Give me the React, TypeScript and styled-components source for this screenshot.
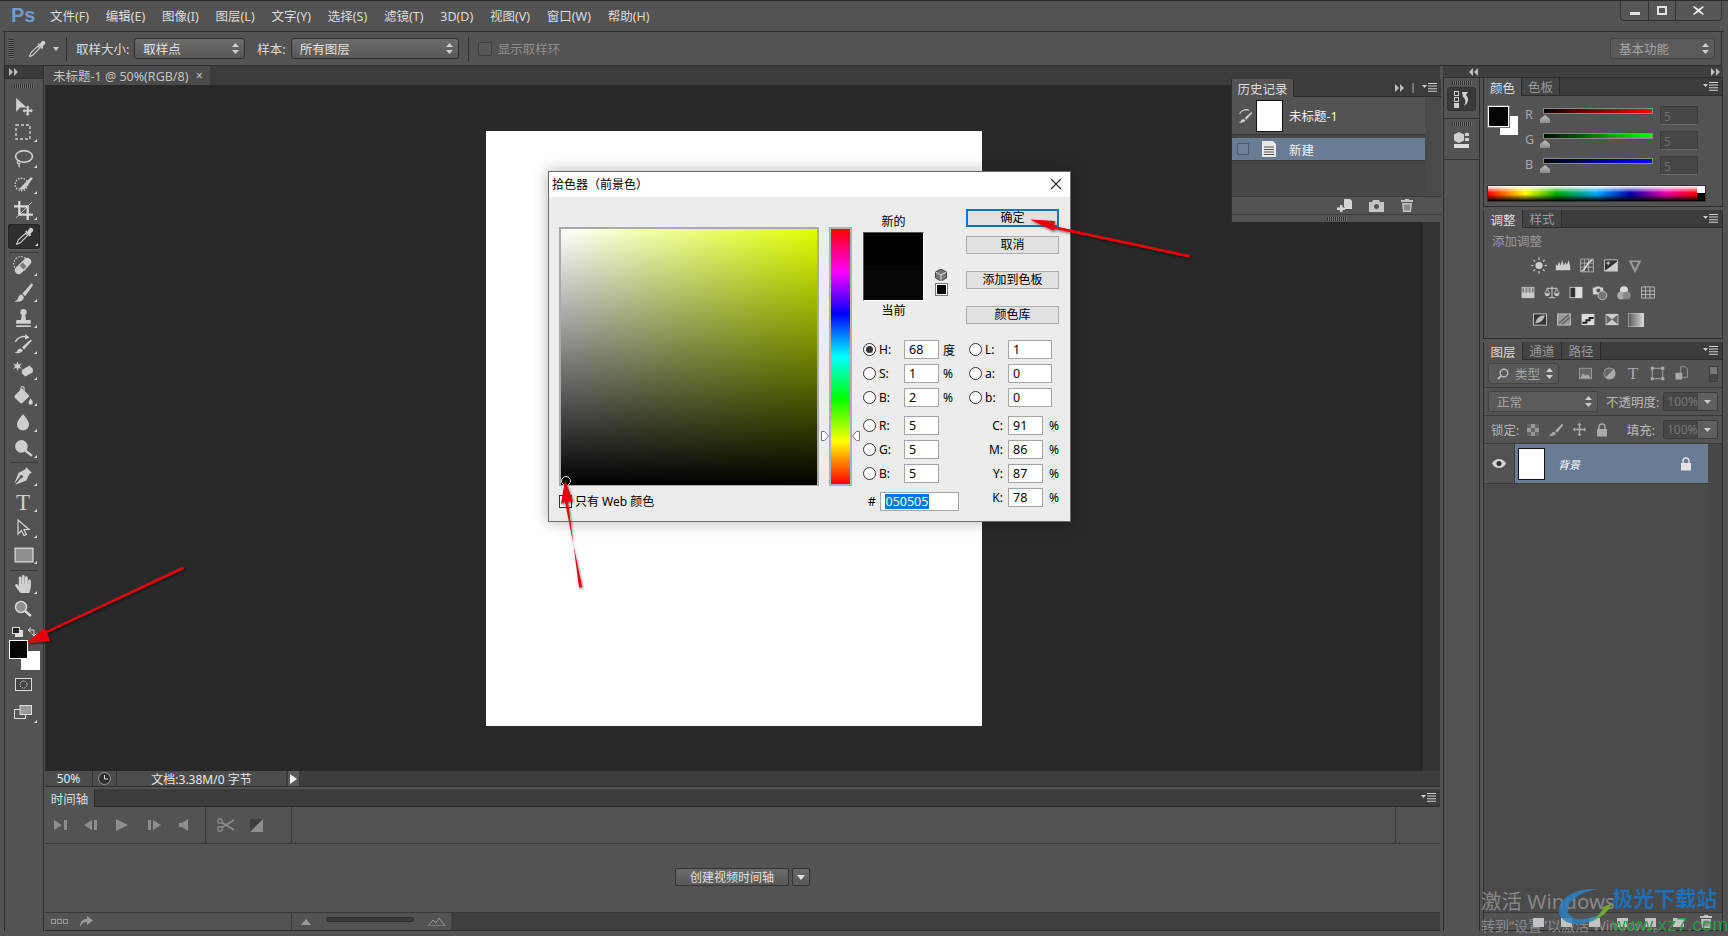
import styled, { createGlobalStyle } from 'styled-components'
import { ReactNode } from 'react'
import { FaHandPaper } from 'react-icons/fa'

const Global = createGlobalStyle`
  html, body { margin: 0; padding: 0; background: #535353; }
  * { box-sizing: border-box; }
`

const sans = `"Noto Sans", "Noto Sans CJK SC", sans-serif`

const Root = styled.div`
  position: relative;
  display: flex;
  flex-direction: column;
  width: 1728px;
  height: 936px;
  overflow: hidden;
  background: #535353;
  font-family: ${sans};
  font-size: 12px;
  color: #d8d8d8;
  border-top: 1px solid #2a2a2a;
`

/* top bars */
const MenuBar = styled.div`
  display: flex;
  align-items: flex-start;
  height: 31px;
  padding-left: 8px;
  background: #535353;
  border-bottom: 1px solid #303030;
  margin: 0 4px 0 3px;
`
const Logo = styled.div`
  width: 39px;
  font-family: "Liberation Sans", sans-serif;
  font-size: 20px;
  line-height: 29px;
  font-weight: 700;
  color: #6d9ccf;
`
const MenuItems = styled.div`
  display: flex;
  gap: 16.8px;
  font-size: 12.5px;
  line-height: 31px;
  color: #dcdcdc;
`
const WinButtons = styled.div`
  display: flex;
  margin-left: auto;
  margin-top: -1px;
  margin-right: 2px;
  height: 21px;
  border: 1px solid #333;
  border-top: none;
  border-radius: 0 0 4px 4px;
  background: #565656;
`
const WinButton = styled.div<{ $w?: number }>`
  display: flex;
  align-items: center;
  justify-content: center;
  width: ${(p) => p.$w ?? 27}px;
  border-left: 1px solid #333;
  &:first-child { border-left: none; }
`
const OptionsBar = styled.div`
  display: flex;
  align-items: center;
  height: 34px;
  margin: 0 6px 0 4px;
  background: #535353;
  border-left: 1px solid #2f2f2f;
  border-right: 1px solid #2f2f2f;
  border-bottom: 1px solid #2f2f2f;
  font-size: 12.5px;
  color: #dcdcdc;
`
const Grip = styled.div`
  width: 5px;
  height: 20px;
  margin: 0 13px 0 4px;
  background: repeating-linear-gradient(to bottom, #2e2e2e 0 1px, #6a6a6a 1px 2px);
`
const OptSep = styled.div<{ $left: number }>`
  width: 1px;
  height: 24px;
  margin: 0 9px 0 ${(p) => p.$left}px;
  background: #2f2f2f;
`
const Select = styled.div<{ $w: number; $dim?: boolean }>`
  display: flex;
  align-items: center;
  justify-content: space-between;
  width: ${(p) => p.$w}px;
  height: 21px;
  padding: 0 5px 0 8px;
  flex: none;
  border: 1px solid ${(p) => (p.$dim ? '#444' : '#2d2d2d')};
  border-radius: 3px;
  background: ${(p) => (p.$dim ? '#5a5a5a' : 'linear-gradient(#6c6c6c, #585858)')};
  color: ${(p) => (p.$dim ? '#a4a4a4' : '#e2e2e2')};
  font-size: 12.5px;
`
const OptLabel = styled.span<{ $left: number }>`
  margin-left: ${(p) => p.$left}px;
  margin-right: 5px;
  white-space: nowrap;
`
const DimCheck = styled.span`
  width: 14px;
  height: 14px;
  margin-right: 6px;
  border: 1px solid #3f3f3f;
  border-radius: 2px;
  background: #585858;
`
const DimText = styled.span`
  color: #8f8f8f;
`
const Right = styled.div`
  margin-left: auto;
  margin-right: 6px;
`
const ArrowSmall = styled.svg`
  margin-left: 6px;
`

const Updown = () => (
  <svg width="7" height="11" viewBox="0 0 7 11">
    <path d="M3.5 0L7 4H0zM3.5 11L0 7h7z" fill="#d0d0d0" />
  </svg>
)

/* workspace */
const Workspace = styled.div`
  display: flex;
  flex: 1;
  min-height: 0;
  padding: 0 5px 5px 4px;
`
const ToolColumn = styled.div`
  display: flex;
  flex-direction: column;
  width: 40px;
  flex: none;
  margin-right: 1px;
  background: #535353;
  border-right: 1px solid #2e2e2e;
  border-left: 1px solid #2e2e2e;
`
const ColHeader = styled.div`
  display: flex;
  align-items: center;
  height: 13px;
  padding: 0 4px;
  background: #3a3a3a;
  border-bottom: 1px solid #2e2e2e;
`
const GripRow = styled.div`
  height: 14px;
  display: flex;
  justify-content: center;
  align-items: center;
  &::before {
    content: '';
    width: 20px;
    height: 4px;
    background: repeating-linear-gradient(to right, #2e2e2e 0 1px, #707070 1px 2px);
  }
`
const Tool = styled.div<{ $on?: boolean; $more?: boolean; $h?: number; $top?: number }>`
  position: relative;
  display: flex;
  align-items: center;
  justify-content: center;
  height: ${(p) => p.$h ?? 26}px;
  margin: ${(p) => p.$top ?? 0}px 4px 0 2px;
  color: #cfcfcf;
  border-radius: 3px;
  ${(p) => p.$on && 'background: #2f2f2f; box-shadow: inset 0 0 0 1px #262626, 0 1px 0 #666; height: 25px; margin: 1px 3px 0 3px;'}
  ${(p) => p.$more && `
    &::after {
      content: '';
      position: absolute;
      right: 2px;
      bottom: 3px;
      border-left: 3px solid transparent;
      border-bottom: 3px solid #e0e0e0;
    }
  `}
`
const ToolSep = styled.div<{ $before: number }>`
  height: 1px;
  margin: ${(p) => p.$before}px 5px 0.5px;
  background: #3a3a3a;
`
const SerifT = styled.span<{ $size?: number; $c?: string }>`
  font-family: "Liberation Serif", serif;
  font-size: ${(p) => p.$size ?? 23}px;
  line-height: 1;
  color: ${(p) => p.$c ?? '#cfcfcf'};
`
const SwapRow = styled.div`
  display: flex;
  justify-content: space-between;
  align-items: center;
  height: 16px;
  padding: 0 5px 0 7px;
  margin-top: 3px;
`
const ColorStack = styled.div`
  position: relative;
  height: 33px;
  margin: 0 0 0 3px;
  width: 30px;
`
const FgChip = styled.div`
  position: absolute;
  left: 1px;
  top: 0;
  width: 19px;
  height: 19px;
  background: #050505;
  border: 1px solid #fff;
  z-index: 1;
`
const BgChip = styled.div`
  position: absolute;
  left: 13px;
  top: 11px;
  width: 19px;
  height: 19px;
  background: #fff;
`

const Center = styled.div`
  display: flex;
  flex-direction: column;
  width: 1395px;
  flex: none;
`
const TabBar = styled.div`
  display: flex;
  height: 20px;
  flex: none;
  background: #3c3c3c;
  border-bottom: 1px solid #2a2a2a;
`
const DocTab = styled.div`
  display: flex;
  align-items: center;
  justify-content: space-between;
  width: 165px;
  padding: 0 7px 0 8px;
  background: #4a4a4a;
  color: #c4c4c4;
  font-size: 12.5px;
  white-space: nowrap;
`
const CanvasRow = styled.div`
  display: flex;
  flex: 1;
  min-height: 0;
`
const Stage = styled.div`
  flex: 1;
  background: #282828;
  padding: 45px 0 0 441px;
`
const Sheet = styled.div`
  width: 496px;
  height: 595px;
  background: #fff;
`
const ScrollTrack = styled.div`
  width: 17px;
  background: #343434;
`
const StatusBar = styled.div`
  display: flex;
  align-items: stretch;
  height: 16px;
  flex: none;
  background: #3d3d3d;
  border-bottom: 1px solid #2c2c2c;
  font-size: 12px;
  color: #e8e8e8;
`
const StatusCell = styled.div<{ $w: number }>`
  display: flex;
  align-items: center;
  justify-content: center;
  width: ${(p) => p.$w}px;
  background: #4c4c4c;
  border-right: 1px solid #363636;
`
const StatusArrow = styled(StatusCell)`
  background: #5a5a5a;
  margin-left: 1px;
`
const Timeline = styled.div`
  display: flex;
  flex-direction: column;
  height: 142px;
  flex: none;
  margin-top: 2px;
  background: #535353;
  border-bottom: 1px solid #2c2c2c;
`
const PanelTabs = styled.div`
  display: flex;
  align-items: stretch;
  height: 18px;
  flex: none;
  background: #3c3c3c;
  border-bottom: 1px solid #2c2c2c;
`
const PanelTab = styled.div<{ $on?: boolean; $w: number }>`
  display: flex;
  align-items: center;
  justify-content: center;
  width: ${(p) => p.$w}px;
  margin-bottom: ${(p) => (p.$on ? '-1px' : '0')};
  background: ${(p) => (p.$on ? '#535353' : '#434343')};
  border-right: 1px solid #2c2c2c;
  color: ${(p) => (p.$on ? '#dedede' : '#999')};
  font-size: 12.5px;
`
const PanelTools = styled.div`
  display: flex;
  align-items: center;
  gap: 8px;
  margin-left: auto;
  padding-right: 4px;
`
const PanelBars = styled.span`
  width: 2px;
  height: 10px;
  border-left: 1px solid #777;
  border-right: 1px solid #777;
`
const TimeControls = styled.div`
  display: flex;
  height: 37px;
  flex: none;
  border-bottom: 1px solid #383838;
`
const TransportGroup = styled.div<{ $w: number; $pad?: number }>`
  display: flex;
  align-items: center;
  width: ${(p) => p.$w}px;
  border-right: 1px solid #383838;
  padding-left: ${(p) => p.$pad ?? 0}px;
  color: #8e8e8e;
`
const TimeSpacer = styled.div`
  width: 1104px;
  border-right: 1px solid #383838;
`
const Transport = styled.span<{ $w: number }>`
  display: flex;
  justify-content: center;
  width: ${(p) => p.$w}px;
`
const TimeBody = styled.div`
  display: flex;
  flex: 1;
  align-items: center;
  justify-content: center;
  gap: 3px;
  padding-bottom: 2px;
`
const CreateButton = styled.div`
  width: 114px;
  height: 18px;
  line-height: 17px;
  text-align: center;
  border: 1px solid #333;
  border-radius: 2px;
  background: linear-gradient(#6a6a6a, #595959);
  color: #e0e0e0;
  font-size: 12px;
`
const CreateDrop = styled(CreateButton)`
  width: 18px;
  display: flex;
  align-items: center;
  justify-content: center;
`
const TimeFoot = styled.div`
  display: flex;
  height: 18px;
  flex: none;
  background: #404040;
  border-top: 1px solid #383838;
`
const FootLeft = styled.div`
  display: flex;
  align-items: center;
  gap: 11px;
  width: 247px;
  padding-left: 6px;
  background: #535353;
  border-right: 1px solid #383838;
`
const FootRight = styled.div`
  display: flex;
  align-items: center;
  justify-content: space-between;
  width: 159px;
  padding: 0 6px 0 9px;
  background: #535353;
`
const TinyRow = styled.span`
  display: flex;
  gap: 1px;
`
const Tiny = styled.span`
  width: 5px;
  height: 5px;
  border: 1px solid #9a9a9a;
`
const ZoomSlider = styled.div`
  width: 88px;
  height: 5px;
  border-radius: 3px;
  background: #3b3b3b;
  border: 1px solid #2b2b2b;
  margin-top: -4px;
`

/* right dock */
const Side = styled.div`
  display: flex;
  flex-direction: column;
  width: 280px;
  flex: none;
  margin-left: 3px;
`
const SideHeader = styled.div`
  display: flex;
  align-items: center;
  justify-content: space-between;
  height: 12px;
  flex: none;
  padding: 0 3px 0 26px;
  background: #3f3f3f;
  border-bottom: 1px solid #2d2d2d;
`
const SideBody = styled.div`
  display: flex;
  flex: 1;
  min-height: 0;
  gap: 3px;
`
const Dock = styled.div`
  width: 37px;
  flex: none;
  border-left: 1px solid #2d2d2d;
  border-right: 1px solid #2d2d2d;
`
const DockGroup = styled.div`
  height: 41px;
  border-bottom: 1px solid #333;
  display: flex;
  flex-direction: column;
  align-items: center;
`
const DockGrip = styled(GripRow)`
  height: 9px;
  flex: none;
`
const DockButton = styled.div<{ $on?: boolean }>`
  display: flex;
  align-items: center;
  justify-content: center;
  width: 29px;
  height: 24px;
  border-radius: 4px;
  ${(p) => p.$on && 'background: #3a3a3a; box-shadow: inset 0 0 0 1px #333;'}
`
const Panels = styled.div`
  display: flex;
  flex-direction: column;
  gap: 3px;
  width: 240px;
  flex: none;
`
const Panel = styled.div<{ $h?: number }>`
  display: flex;
  flex-direction: column;
  ${(p) => (p.$h ? `height: ${p.$h}px; flex: none;` : 'flex: 1; min-height: 0;')}
  background: #535353;
  border: 1px solid #2d2d2d;
  border-top: none;
`
const ColorBody = styled.div`
  display: flex;
  padding: 10px 0 0 4px;
  height: 90px;
`
const ChipStack = styled.div`
  position: relative;
  width: 30px;
  height: 30px;
  margin-right: 7px;
  flex: none;
`
const ChipFg = styled.div`
  position: absolute;
  left: 0;
  top: 0;
  width: 21px;
  height: 21px;
  background: #050505;
  border: 1px solid #fff;
  outline: 1px solid #777;
  z-index: 1;
`
const ChipBg = styled.div`
  position: absolute;
  left: 12px;
  top: 10px;
  width: 18px;
  height: 19px;
  background: #fff;
`
const Sliders = styled.div`
  display: flex;
  flex-direction: column;
  gap: 6px;
`
const SliderRow = styled.div`
  display: grid;
  grid-template-columns: 18px 110px 38px;
  height: 19px;
  align-items: start;
  color: #a9a9a9;
  font-size: 12.5px;
`
const SliderLabel = styled.span`
  line-height: 17px;
`
const SliderTrack = styled.div<{ $end: string }>`
  position: relative;
  height: 6px;
  margin-top: 2px;
  background: linear-gradient(to right, #050505, ${(p) => p.$end});
  outline: 1px solid #888;
  outline-offset: -1px;
  &::after {
    content: '';
    position: absolute;
    left: -3px;
    top: 7px;
    width: 10px;
    height: 8px;
    background: linear-gradient(#c0c0c0, #8a8a8a);
    clip-path: polygon(50% 0, 100% 50%, 100% 100%, 0 100%, 0 50%);
  }
`
const SliderValue = styled.div`
  margin-left: 7px;
  height: 19px;
  width: 38px;
  line-height: 19px;
  padding-left: 3px;
  background: #464646;
  border: 1px solid #3d3d3d;
  border-bottom-color: #6a6a6a;
  color: #6f6f6f;
  font-size: 12px;
`
const Spectrum = styled.div`
  display: flex;
  width: 217px;
  height: 15px;
  margin-left: 4px;
  outline: 1px solid #333;
`
const SpectrumRamp = styled.div`
  flex: 1;
  background:
    linear-gradient(to bottom, #fff, rgba(255,255,255,0) 45%, rgba(0,0,0,0) 55%, #000),
    linear-gradient(to right, #f00, #ff0 18%, #0a0 33%, #0af 52%, #00a 68%, #e0a 85%, #f00);
`
const SpectrumEnd = styled.div`
  width: 8px;
  background: linear-gradient(#fff 50%, #000 50%);
`
const AdjustTitle = styled.div`
  padding: 3px 0 0 8px;
  height: 24px;
  color: #999;
  font-size: 12.5px;
`
const IconRow = styled.div<{ $pad: number }>`
  display: flex;
  gap: 8px;
  height: 27px;
  align-items: center;
  padding-left: ${(p) => p.$pad}px;
`
const IconCell = styled.div`
  display: flex;
  width: 16px;
  height: 16px;
  align-items: center;
  justify-content: center;
`
const FilterRow = styled.div`
  display: flex;
  align-items: center;
  height: 28px;
  padding-left: 4px;
  border-bottom: 1px solid #3a3a3a;
  flex: none;
`
const LayerIcons = styled.div<{ $left?: number; $gap?: number }>`
  display: flex;
  gap: ${(p) => p.$gap ?? 8}px;
  margin-left: ${(p) => p.$left ?? 18}px;
`
const Toggle = styled.div`
  width: 9px;
  height: 16px;
  margin-left: 20px;
  background: linear-gradient(#777 50%, #474747 50%);
  border: 1px solid #3d3d3d;
`
const SmallLabel = styled.span<{ $left: number; $auto?: boolean }>`
  margin-left: ${(p) => (p.$auto ? 'auto' : `${p.$left}px`)};
  margin-right: 4px;
  color: #b9b9b9;
  font-size: 12.5px;
  white-space: nowrap;
`
const DimBox = styled.div<{ $auto?: boolean }>`
  display: flex;
  height: 19px;
  width: 55px;
  border: 1px solid #3b3b3b;
  border-radius: 2px;
  margin-left: ${(p) => (p.$auto ? 'auto' : '4px')};
  margin-right: 4px;
  flex: none;
`
const DimValue = styled.span`
  flex: 1;
  line-height: 17px;
  padding-left: 3px;
  background: #474747;
  color: #777;
  font-size: 12px;
`
const DimArrow = styled.span`
  display: flex;
  width: 19px;
  align-items: center;
  justify-content: center;
  background: #5f5f5f;
`
const LayerList = styled.div`
  flex: 1;
  display: flex;
  min-height: 0;
  background: #4a4a4a;
`
const LayerMain = styled.div`
  width: 224px;
  flex: none;
`
const LayerTrack = styled.div`
  flex: 1;
  background: #474747;
`
const LayerRow = styled.div`
  display: flex;
  height: 40px;
  border-bottom: 1px solid #3a3a3a;
  background: #535353;
`
const EyeCell = styled.div`
  display: flex;
  align-items: center;
  justify-content: center;
  width: 31px;
  border-right: 1px solid #3a3a3a;
`
const LayerBody = styled.div`
  display: flex;
  align-items: center;
  flex: 1;
  padding: 0 16px 0 3px;
  background: #6a7b94;
`
const LayerThumb = styled.div`
  width: 27px;
  height: 32px;
  border: 1px solid #111;
  background: #fff;
  margin-right: 13px;
`
const LayerName = styled.span`
  flex: 1;
  font-style: italic;
  font-size: 11px;
  color: #fff;
`
const PanelFoot = styled.div`
  display: flex;
  height: 18px;
  flex: none;
  align-items: center;
  justify-content: flex-end;
  gap: 15px;
  padding-right: 10px;
  border-top: 1px solid #3a3a3a;
`

/* floating history panel */
const History = styled.div`
  position: absolute;
  left: 1231px;
  top: 78px;
  width: 210px;
  height: 143px;
  display: flex;
  flex-direction: column;
  background: #535353;
  border-left: 1px solid #2d2d2d;
`
const HistoryList = styled.div`
  display: flex;
  flex: 1;
  min-height: 0;
`
const HistoryRows = styled.div`
  width: 193px;
  flex: none;
  background: #474747;
`
const HistoryTrack = styled.div`
  flex: 1;
  background: #4a4a4a;
`
const HistoryRow = styled.div<{ $on?: boolean }>`
  display: flex;
  align-items: center;
  height: ${(p) => (p.$on ? 23 : 38)}px;
  margin-bottom: ${(p) => (p.$on ? 0 : 3)}px;
  padding-left: 5px;
  border-bottom: 1px solid #383838;
  background: ${(p) => (p.$on ? '#6a7b94' : '#535353')};
  color: #f0f0f0;
  font-size: 12.5px;
`
const HistoryThumb = styled.div`
  width: 27px;
  height: 32px;
  margin: 0 6px 0 2px;
  border: 1px solid #111;
  background: #fff;
`
const HistoryBox = styled.div`
  width: 12px;
  height: 12px;
  margin-right: 13px;
  border: 1px solid #4c5a6c;
  background: #6f7f97;
`
const HistoryDoc = styled.svg`
  margin-right: 13px;
`
const HistoryFoot = styled.div`
  display: flex;
  align-items: center;
  justify-content: flex-end;
  gap: 17px;
  height: 19px;
  flex: none;
  padding-right: 28px;
  border-top: 1px solid #3a3a3a;
  border-bottom: 1px solid #3a3a3a;
`
const HistoryGrip = styled.div`
  height: 7px;
  flex: none;
  display: flex;
  justify-content: center;
  align-items: center;
  &::before {
    content: '';
    width: 20px;
    height: 4px;
    background: repeating-linear-gradient(to right, #2e2e2e 0 1px, #707070 1px 2px);
  }
`

/* colour picker dialog */
const Dialog = styled.div`
  position: absolute;
  left: 548px;
  top: 170px;
  width: 523px;
  height: 351px;
  display: flex;
  flex-direction: column;
  background: #ececec;
  border: 1px solid #6b6b6b;
  box-shadow: 0 0 14px rgba(0, 0, 0, 0.3);
  color: #000;
  font-size: 12px;
`
const DialogTitle = styled.div`
  display: flex;
  align-items: center;
  justify-content: space-between;
  height: 25px;
  flex: none;
  padding: 0 8px 2px 3px;
  background: #fff;
`
const DialogBody = styled.div`
  display: flex;
  padding: 12px 0 0 10px;
`
const PickerCol = styled.div`
  width: 260px;
  flex: none;
`
const Field = styled.div`
  position: relative;
  width: 260px;
  height: 259px;
  margin-top: 18px;
  border: 2px solid #aaa;
  border-bottom-width: 1px;
  background:
    linear-gradient(to top, #000, rgba(0, 0, 0, 0)),
    linear-gradient(to right, #fff, #dfff00);
`
const Picker = styled.div`
  position: absolute;
  left: 0;
  bottom: -1px;
  width: 10px;
  height: 10px;
  border-radius: 50%;
  border: 1px solid #e8e8e8;
`
const WebRow = styled.div`
  display: flex;
  align-items: center;
  gap: 3px;
  margin-top: 6px;
`
const CheckBox = styled.span`
  width: 13px;
  height: 13px;
  border: 1px solid #333;
  background: #fff;
`
const Hue = styled.div`
  position: relative;
  width: 23px;
  height: 259px;
  flex: none;
  margin: 18px 0 0 10px;
  border: 2px solid #b0b0b0;
  background: linear-gradient(to bottom, #f00, #f0f, #00f, #0ff, #0f0, #ff0, #f00);
`
const HueMark = styled.svg<{ $side: 'l' | 'r' }>`
  position: absolute;
  top: 202px;
  ${(p) => (p.$side === 'l' ? 'left: -10px;' : 'right: -10px;')}
`
const RightCol = styled.div`
  width: 196px;
  flex: none;
  margin-left: 11px;
`
const TopRow = styled.div`
  display: flex;
  height: 131px;
`
const SwatchCol = styled.div`
  display: flex;
  flex-direction: column;
  align-items: center;
  width: 61px;
  padding-top: 5px;
  flex: none;
`
const SwatchLabel = styled.span`
  line-height: 16px;
`
const Swatch = styled.div`
  width: 61px;
  height: 69px;
  margin: 2px 0;
  background: linear-gradient(#000 50%, #050505 50%);
  border: 1px solid #555;
  border-right-color: #fff;
  border-bottom-color: #fff;
`
const SwatchSide = styled.div`
  display: flex;
  flex-direction: column;
  align-items: center;
  gap: 2px;
  width: 14px;
  flex: none;
  margin: 60px 0 0 10px;
`
const MiniSwatch = styled.div`
  width: 13px;
  height: 13px;
  background: #000;
  border: 1px solid #777;
  box-shadow: inset 0 0 0 1px #fff;
`
const ButtonCol = styled.div`
  display: flex;
  flex-direction: column;
  width: 93px;
  margin-left: 18px;
  flex: none;
`
const DlgButton = styled.div<{ $default?: boolean; $gap: number }>`
  height: 18px;
  margin-top: ${(p) => p.$gap}px;
  line-height: ${(p) => (p.$default ? 14 : 16)}px;
  text-align: center;
  background: #e1e1e1;
  border: ${(p) => (p.$default ? '2px solid #0078d7' : '1px solid #adadad')};
`
const Fields = styled.div`
  display: flex;
`
const FieldCol = styled.div<{ $w: number }>`
  display: flex;
  flex-direction: column;
  width: ${(p) => p.$w}px;
  flex: none;
`
const Row = styled.div<{ $top?: number }>`
  display: flex;
  align-items: center;
  height: 19px;
  margin-top: ${(p) => p.$top ?? 5}px;
  &:first-child { margin-top: 0; }
`
const Radio = styled.span<{ $on?: boolean }>`
  position: relative;
  width: 13px;
  height: 13px;
  flex: none;
  border-radius: 50%;
  border: 1px solid #333;
  background: #fff;
  ${(p) => p.$on && `
    &::after {
      content: '';
      position: absolute;
      inset: 2px;
      border-radius: 50%;
      background: #333;
    }
  `}
`
const RowLabel = styled.span<{ $w: number; $right?: boolean }>`
  width: ${(p) => p.$w}px;
  flex: none;
  padding-left: ${(p) => (p.$right ? 0 : 3)}px;
  padding-right: ${(p) => (p.$right ? 5 : 0)}px;
  text-align: ${(p) => (p.$right ? 'right' : 'left')};
`
const NumBox = styled.div<{ $w: number }>`
  width: ${(p) => p.$w}px;
  height: 19px;
  flex: none;
  padding-left: 4px;
  line-height: 18px;
  font-size: 12.5px;
  background: #fff;
  border: 1px solid #a5a5a5;
`
const Unit = styled.span<{ $left?: number }>`
  margin-left: ${(p) => p.$left ?? 4}px;
`
const HashLabel = styled.span`
  width: 17px;
  flex: none;
  padding-left: 5px;
`
const Selected = styled.span`
  display: inline-block;
  background: #0078d7;
  color: #fff;
  line-height: 15px;
  padding: 0 0.5px;
`

/* things lying over the page */
const Overlay = styled.svg`
  position: absolute;
  left: 0;
  top: 0;
  pointer-events: none;
`
const Watermark = styled.div`
  position: absolute;
  left: 1481px;
  top: 885px;
  color: rgba(190, 190, 190, 0.55);
  pointer-events: none;
`
const WmTitle = styled.div`
  font-size: 20.5px;
  line-height: 30px;
`
const WmSub = styled.div`
  font-size: 14px;
  line-height: 18px;
  margin-top: 1px;
`
const Brand = styled.div`
  position: absolute;
  left: 1612px;
  top: 881px;
  font-family: "Noto Sans CJK SC", sans-serif;
  font-weight: 700;
  pointer-events: none;
  filter: blur(0.4px);
`
const BrandName = styled.div`
  font-size: 21px;
  line-height: 30px;
  color: #1f6fb8;
`
const BrandUrl = styled.div`
  font-family: "Liberation Sans", sans-serif;
  font-weight: 400;
  font-size: 19px;
  line-height: 20px;
  margin-top: 3px;
  color: #2f9a4a;
`

const G = ({ s = 20, c = '#cfcfcf', children }: { s?: number; c?: string; children: ReactNode }) => (
  <svg width={s} height={s} viewBox="0 0 20 20" fill={c} stroke="none" style={{ display: 'block' }}>
    {children}
  </svg>
)

const Dropper = ({ s = 20 }: { s?: number }) => (
  <G s={s}>
    <path d="M15 2a2.200 2.200 0 0 1 3 3l-2.500 2.500 1 1L15 10l-4.500-4.500 1.500-1.500 .5 1.500z" />
    <path d="M11 7l2 2-7 7-3.200 1.500-.3-.3L4 13.500z" fill="none" stroke="#cfcfcf" strokeWidth="1.100" />
  </G>
)
const DoubleRight = () => (
  <svg width="9" height="8" viewBox="0 0 9 8"><path d="M0 0l4 4-4 4zM5 0l4 4-4 4z" fill="#bdbdbd" /></svg>
)
const DoubleLeft = () => (
  <svg width="9" height="8" viewBox="0 0 9 8"><path d="M4 0L0 4l4 4zM9 0L5 4l4 4z" fill="#bdbdbd" /></svg>
)
const PanelMenu = () => (
  <svg width="15" height="9" viewBox="0 0 15 9">
    <path d="M0 2h5L2.500 5z" fill="#d0d0d0" />
    <path d="M6 0h9v1H6zM6 2.600h9v1H6zM6 5.200h9v1H6zM6 7.800h9v1H6z" fill="#d0d0d0" />
  </svg>
)
const Lock = ({ c = '#b8b8b8' }: { c?: string }) => (
  <svg width="12" height="14" viewBox="0 0 12 14">
    <path d="M3 6V4a3 3 0 0 1 6 0v2" fill="none" stroke={c} strokeWidth="1.400" />
    <rect x="1" y="6" width="10" height="7.500" fill={c} />
  </svg>
)
const Trash = () => (
  <svg width="12" height="13" viewBox="0 0 12 13" fill="#c4c4c4">
    <path d="M4 0h4v1h4v2H0V1h4zM1 4h10l-1 9H2zM3.500 5.500v6h1v-6zM5.500 5.500v6h1v-6zM7.500 5.500v6h1v-6z" fillRule="evenodd" />
  </svg>
)
const Camera = () => (
  <svg width="15" height="12" viewBox="0 0 15 12" fill="#c4c4c4">
    <path d="M0 2h3l1-2h6l1 2h4v10H0zM7.500 4a2.500 2.500 0 1 0 0 5 2.500 2.500 0 0 0 0-5z" fillRule="evenodd" />
  </svg>
)
const NewDoc = () => (
  <svg width="15" height="13" viewBox="0 0 15 13" fill="#d6d6d6">
    <path d="M7 0h6l2 2v8H8V8H7zM3 6h2.500v2.500H8V11H5.500v2H3v-2H0V8.500h3z" />
  </svg>
)
const FootDoc = () => (
  <svg width="13" height="13" viewBox="0 0 13 13" fill="#c4c4c4"><rect x="1" y="3" width="11" height="9" /></svg>
)
const DownTiny = () => (
  <svg width="7" height="4" viewBox="0 0 7 4"><path d="M0 0h7L3.500 4z" fill="#ccc" /></svg>
)

const tools: { n: ReactNode; more?: boolean; on?: boolean }[][] = [
  [
    { n: <G s={21}><path d="M3 2v13l4-4h6z" /><path d="M14 9l2 2h-1v2h2v-1l2 2-2 2v-1h-2v2h1l-2 2-2-2h1v-2h-2v1l-2-2 2-2v1h2v-2h-1z" /></G> },
    { more: true, n: <G s={20}><rect x="3" y="3" width="14" height="14" fill="none" stroke="#cfcfcf" strokeWidth="1.400" strokeDasharray="3 2" /></G> },
    { more: true, n: <G s={21}><ellipse cx="10.500" cy="8" rx="8" ry="5.500" fill="none" stroke="#cfcfcf" strokeWidth="1.500" /><path d="M5 12c-2 2 0 3.500 1 3s-1-1.500 0 3.500" fill="none" stroke="#cfcfcf" strokeWidth="1.300" /></G> },
    { more: true, n: <G s={21}><circle cx="8" cy="10" r="6" fill="none" stroke="#cfcfcf" strokeWidth="1.300" strokeDasharray="1.400 1.300" /><path d="M9 11l8-8 2 1-6 8c-1 3-5 4-8 2 2-.5 3-1.500 4-3z" /></G> },
    { more: true, n: <G s={21}><path d="M6 1v13h13M1 6h13v13" fill="none" stroke="#d8d8d8" strokeWidth="2.200" /><path d="M3 17L18 2" stroke="#d8d8d8" strokeWidth="0.800" /></G> },
    { more: true, on: true, n: <Dropper s={21} /> },
  ],
  [
    { more: true, n: <G s={22}><circle cx="8" cy="8" r="6.500" fill="none" stroke="#cfcfcf" strokeDasharray="1.500 1.300" /><g transform="rotate(-45 10 10)"><rect x="1" y="6.500" width="18" height="7" rx="3.500" fill="#cfcfcf" /><rect x="8" y="7.500" width="4" height="5" fill="#7a7a7a" /></g></G> },
    { more: true, n: <G s={21}><path d="M18 1L9 11l2.500 2.500L19 3z" /><path d="M8.500 12c-2 0-3 1-3.500 3-.5 2-2 3-4 3.500 4 1 8 0 9-2.500.5-1.500 0-3-1.500-4z" /></G> },
    { more: true, n: <G s={21}><circle cx="10" cy="4" r="3" /><path d="M8.500 6.500h3l1 5h3.500a1 1 0 0 1 1 1V15H3v-2.500a1 1 0 0 1 1-1h3.500z" /><rect x="3" y="16.500" width="14" height="1.600" /></G> },
    { more: true, n: <G s={22}><path d="M3 8c2-4 7-6 11-4" fill="none" stroke="#cfcfcf" strokeWidth="1.400" /><path d="M12 1l4 3-4 2z" /><path d="M17 6L9 13l2 2 7-8zM8 14c-2 0-3 1-3 2s-2 2-3 2c3 1 7 0 8-2z" /></G> },
    { more: true, n: <G s={22}><path d="M5 2l1 3 3-1-2 2.500 2 2.500-3-1-1 3-1-3-3 1 2-2.500-2-2.500 3 1z" /><path d="M9 10l7-4 3 3v3l-7 4-3-3z" /></G> },
    { more: true, n: <G s={22}><path d="M9 3l7 7-6 6c-1 1-2 1-3 0l-4-4c-1-1-1-2 0-3z" /><path d="M8 8V3a1.500 1.500 0 0 1 3 0v3" fill="none" stroke="#cfcfcf" /><path d="M17 12c1 2 2 3 2 4a2 2 0 0 1-4 0c0-1 1-2 2-4z" /></G> },
    { more: true, n: <G s={20}><path d="M10 2c3 4 6 7 6 10.500a6 6 0 0 1-12 0C4 9 7 6 10 2z" /></G> },
    { more: true, n: <G s={21}><circle cx="8" cy="8" r="6" /><path d="M12 12l6 5" stroke="#cfcfcf" strokeWidth="2.400" /></G> },
  ],
  [
    { more: true, n: <G s={22}><path d="M13 2l5 5-2 1-3 6-10 4 5-6a1.500 1.500 0 1 0-1-1l-5 6 4-10 6-3z" /></G> },
    { more: true, n: <SerifT>T</SerifT> },
    { more: true, n: <G s={20}><path d="M5 2v14l3.500-3.500 2.500 5 2.500-1-2.500-5h5z" fill="none" stroke="#d8d8d8" strokeWidth="1.200" /></G> },
    { more: true, n: <G s={21}><rect x="2" y="4" width="17" height="13" fill="#8f8f8f" stroke="#dcdcdc" strokeWidth="1.200" /></G> },
  ],
]

const adjustRows: { pad: number; items: ReactNode[] }[] = [
  {
    pad: 47,
    items: [
      <G s={17} key="a"><circle cx="10" cy="10" r="4.500" /><path d="M10 0v3M10 17v3M0 10h3M17 10h3M3 3l2 2M15 15l2 2M17 3l-2 2M5 15l-2 2" stroke="#cfcfcf" strokeWidth="1.500" /></G>,
      <G s={17} key="b"><path d="M1 16V11l1-3 1 3 2-6 2 5 2-7 2 7 2-4 2 3 2-6 2 8v5z" /></G>,
      <G s={17} key="c"><path d="M2 2h16v16H2zM2 7h16M2 12h16M7 2v16M12 2v16" fill="none" stroke="#bbb" /><path d="M3 17C9 15 10 5 17 3" fill="none" stroke="#eee" strokeWidth="1.500" /></G>,
      <G s={17} key="d"><rect x="2" y="3" width="16" height="14" fill="#333" stroke="#ddd" /><path d="M2 17L18 5v12z" fill="#ccc" /><path d="M4 7h5M6.500 4.500v5" stroke="#eee" /></G>,
      <G s={18} key="e"><path d="M2 3h16l-8 16z" fill="#999" /><path d="M6 5h8l-4 8z" fill="#555" /></G>,
    ],
  },
  {
    pad: 36,
    items: [
      <G s={17} key="a"><rect x="2" y="3" width="16" height="14" fill="#ccc" /><rect x="3" y="4" width="14" height="6" fill="#777" /><path d="M6 4v6M10 4v6M14 4v6" stroke="#ddd" strokeWidth="1.500" /></G>,
      <G s={18} key="b"><path d="M10 2v14M4 4h12M6 16h8" stroke="#ccc" strokeWidth="1.300" /><path d="M4 4L1 11h6zM16 4l-3 7h6z" fill="none" stroke="#ccc" /><path d="M1 11a3 3 0 0 0 6 0zM13 11a3 3 0 0 0 6 0z" /></G>,
      <G s={17} key="c"><rect x="2" y="3" width="16" height="14" fill="#ddd" /><rect x="3" y="4" width="6" height="12" fill="#333" /></G>,
      <G s={18} key="d"><path d="M1 3h3l1-1h5l1 1h3v9H1z" /><circle cx="8" cy="7" r="2.500" fill="#555" /><circle cx="13" cy="13" r="5.500" fill="#777" stroke="#ccc" /></G>,
      <G s={18} key="e"><circle cx="10" cy="6.500" r="5" fill="#ddd" /><circle cx="6.500" cy="13" r="5" fill="#aaa" /><circle cx="13.500" cy="13" r="5" fill="#888" /></G>,
      <G s={17} key="f"><path d="M2 3h16v14H2zM2 8h16M2 12.500h16M7 3v14M12.500 3v14" fill="none" stroke="#ccc" /></G>,
    ],
  },
  {
    pad: 48,
    items: [
      <G s={17} key="a"><rect x="2" y="3" width="16" height="14" fill="#333" stroke="#ddd" /><path d="M4 15c2-8 6-10 12-10-1 5-5 9-12 10z" fill="#bbb" /></G>,
      <G s={17} key="b"><rect x="2" y="3" width="16" height="14" fill="#999" stroke="#ccc" /><path d="M3 15L16 4M7 16L18 7" stroke="#666" strokeWidth="2" /></G>,
      <G s={17} key="c"><rect x="2" y="3" width="16" height="14" fill="#ddd" /><path d="M3 14h5V11h4V8h5" fill="none" stroke="#222" strokeWidth="2.500" /></G>,
      <G s={17} key="d"><rect x="2" y="3" width="16" height="14" fill="#ccc" /><path d="M3 4l7 6-7 6zM17 4l-7 6 7 6z" fill="#666" /></G>,
      <svg width="16" height="14" viewBox="0 0 16 14" key="e"><defs><linearGradient id="gm"><stop stopColor="#555" /><stop offset="1" stopColor="#ddd" /></linearGradient></defs><rect width="16" height="14" fill="url(#gm)" stroke="#ccc" /></svg>,
    ],
  },
]

const sepBefore = [2.5, 0.5, 2.5]

export default function App() {
  return (
    <Root>
      <Global />
      <MenuBar>
        <Logo>Ps</Logo>
        <MenuItems>
          {['文件(F)', '编辑(E)', '图像(I)', '图层(L)', '文字(Y)', '选择(S)', '滤镜(T)', '3D(D)', '视图(V)', '窗口(W)', '帮助(H)'].map((m) => (
            <span key={m}>{m}</span>
          ))}
        </MenuItems>
        <WinButtons>
          <WinButton><svg width="10" height="10" viewBox="0 0 10 10"><rect y="7" width="10" height="3" fill="#e4e4e4" /></svg></WinButton>
          <WinButton><svg width="10" height="9" viewBox="0 0 10 9"><path d="M0 0h10v9H0zM2 2v5h6V2z" fill="#e4e4e4" fillRule="evenodd" /></svg></WinButton>
          <WinButton $w={46}><svg width="11" height="9" viewBox="0 0 11 9"><path d="M1 0l4.500 3L10 0l1 1-4 3.500L11 8l-1 1-4.500-3L1 9 0 8l4-3.500L0 1z" fill="#e8e8e8" /></svg></WinButton>
        </WinButtons>
      </MenuBar>
      <OptionsBar>
        <Grip />
        <Dropper />
        <ArrowSmall width="6" height="4" viewBox="0 0 6 4"><path d="M0 0h6L3 4z" fill="#d0d0d0" /></ArrowSmall>
        <OptSep $left={7} />
        <OptLabel $left={0}>取样大小:</OptLabel>
        <Select $w={111}>取样点<Updown /></Select>
        <OptLabel $left={12}>样本:</OptLabel>
        <Select $w={168}>所有图层<Updown /></Select>
        <OptSep $left={9} />
        <DimCheck />
        <DimText>显示取样环</DimText>
        <Right><Select $w={105} $dim>基本功能<Updown /></Select></Right>
      </OptionsBar>
      <Workspace>
        <ToolColumn>
          <ColHeader><DoubleRight /></ColHeader>
          <GripRow />
          {tools.map((group, i) => (
            <div key={i}>
              {i > 0 && <ToolSep $before={sepBefore[i - 1]} />}
              {group.map((t, j) => (
                <Tool key={j} $more={t.more} $on={t.on}>{t.n}</Tool>
              ))}
            </div>
          ))}
          <ToolSep $before={sepBefore[2]} />
          <Tool $more $h={26}><FaHandPaper size={18} color="#d0d0d0" /></Tool>
          <Tool $h={24}><G s={20}><circle cx="8" cy="8" r="5.500" fill="#8f8f8f" stroke="#d8d8d8" strokeWidth="1.500" /><path d="M12 12l6 5" stroke="#d8d8d8" strokeWidth="2.400" /></G></Tool>
          <SwapRow>
            <svg width="11" height="10" viewBox="0 0 11 10"><rect x="3" y="3" width="8" height="7" fill="#ddd" /><rect x=".5" y=".5" width="7" height="6" fill="#222" stroke="#ddd" /></svg>
            <svg width="11" height="11" viewBox="0 0 11 11"><path d="M1 3h6v6M1 3l3-2.500M1 3l3 2.500M7 9L4.500 6.500M7 9l2.500-2.500" fill="none" stroke="#ddd" /></svg>
          </SwapRow>
          <ColorStack>
            <FgChip />
            <BgChip />
          </ColorStack>
          <Tool $h={26} $top={-2}>
            <svg width="17" height="13" viewBox="0 0 17 13"><rect x=".5" y=".5" width="16" height="12" fill="#444" stroke="#ddd" /><circle cx="8.500" cy="6.500" r="3.500" fill="none" stroke="#eee" strokeDasharray="1 1" /></svg>
          </Tool>
          <Tool $more $h={29}>
            <svg width="18" height="14" viewBox="0 0 18 14"><rect x=".5" y="4.500" width="11" height="9" fill="#555" stroke="#ddd" /><rect x="6" y=".5" width="11.500" height="9" fill="#999" stroke="#ddd" /></svg>
          </Tool>
        </ToolColumn>

        <Center>
          <TabBar>
            <DocTab>未标题-1 @ 50%(RGB/8)<span>×</span></DocTab>
          </TabBar>
          <CanvasRow>
            <Stage><Sheet /></Stage>
            <ScrollTrack />
          </CanvasRow>
          <StatusBar>
            <StatusCell $w={48}>50%</StatusCell>
            <StatusCell $w={24}>
              <svg width="13" height="13" viewBox="0 0 13 13"><circle cx="6.500" cy="6.500" r="6" fill="#2f2f2f" stroke="#999" /><path d="M6.500 3v4H10" fill="none" stroke="#ddd" /></svg>
            </StatusCell>
            <StatusCell $w={170}>文档:3.38M/0 字节</StatusCell>
            <StatusArrow $w={12}><svg width="7" height="10" viewBox="0 0 7 10"><path d="M0 0l7 5-7 5z" fill="#f0f0f0" /></svg></StatusArrow>
          </StatusBar>
          <Timeline>
            <PanelTabs>
              <PanelTab $on $w={50}>时间轴</PanelTab>
              <PanelTools><PanelMenu /></PanelTools>
            </PanelTabs>
            <TimeControls>
              <TransportGroup $w={161}>
                <Transport $w={30}><svg width="13" height="10" viewBox="0 0 13 10"><path d="M0 0l8 5-8 5zM10 0h3v10h-3z" fill="#8e8e8e" /></svg></Transport>
                <Transport $w={30}><svg width="13" height="10" viewBox="0 0 13 10"><path d="M8 0L0 5l8 5zM10 0h3v10h-3z" fill="#8e8e8e" /></svg></Transport>
                <Transport $w={33}><svg width="12" height="12" viewBox="0 0 12 12"><path d="M0 0l12 6-12 6z" fill="#8e8e8e" /></svg></Transport>
                <Transport $w={32}><svg width="13" height="10" viewBox="0 0 13 10"><path d="M0 0h3v10H0zM5 0l8 5-8 5z" fill="#8e8e8e" /></svg></Transport>
                <Transport $w={27}><svg width="9" height="12" viewBox="0 0 9 12"><path d="M0 4h3l6-4v12L3 8H0z" fill="#8e8e8e" /></svg></Transport>
              </TransportGroup>
              <TransportGroup $w={86} $pad={2}>
                <Transport $w={34}><svg width="17" height="14" viewBox="0 0 17 14"><circle cx="3" cy="3" r="2.300" fill="none" stroke="#8e8e8e" strokeWidth="1.300" /><circle cx="3" cy="11" r="2.300" fill="none" stroke="#8e8e8e" strokeWidth="1.300" /><path d="M5 4.500L17 12M5 9.500L17 2" stroke="#8e8e8e" strokeWidth="1.500" /></svg></Transport>
                <Transport $w={28}><svg width="13" height="13" viewBox="0 0 13 13"><rect width="13" height="13" fill="#8e8e8e" /><path d="M0 13L13 0H0z" fill="#3f3f3f" /></svg></Transport>
              </TransportGroup>
              <TimeSpacer />
            </TimeControls>
            <TimeBody>
              <CreateButton>创建视频时间轴</CreateButton>
              <CreateDrop><svg width="8" height="5" viewBox="0 0 8 5"><path d="M0 0h8L4 5z" fill="#e0e0e0" /></svg></CreateDrop>
            </TimeBody>
            <TimeFoot>
              <FootLeft>
                <TinyRow><Tiny /><Tiny /><Tiny /></TinyRow>
                <svg width="14" height="11" viewBox="0 0 14 11"><path d="M8 0l6 4.500L8 9V6C5 6 3 7 1 11 1 6 3 3 8 3z" fill="#9a9a9a" /></svg>
              </FootLeft>
              <FootRight>
                <svg width="10" height="6" viewBox="0 0 10 6"><path d="M0 6l5-6 5 6z" fill="#9a9a9a" /></svg>
                <ZoomSlider />
                <svg width="17" height="8" viewBox="0 0 17 8"><path d="M0 8l5-6 3 3 3-5 6 8z" fill="none" stroke="#9a9a9a" /></svg>
              </FootRight>
            </TimeFoot>
          </Timeline>
        </Center>

        <Side>
          <SideHeader><DoubleLeft /><DoubleRight /></SideHeader>
          <SideBody>
            <Dock>
              <DockGroup>
                <DockGrip />
                <DockButton $on>
                  <svg width="16" height="17" viewBox="0 0 16 17" fill="#d0d0d0">
                    <path d="M0 0h5v5H0zM1 1v3h3V1zM0 6h5v5H0zM1 7v3h3V7zM0 12h5v5H0z" fillRule="evenodd" />
                    <path d="M8 1h6l-2 3c3 3 3 8-2 11 2-3 2-7-1-9z" />
                  </svg>
                </DockButton>
              </DockGroup>
              <DockGroup>
                <DockGrip />
                <DockButton>
                  <svg width="16" height="17" viewBox="0 0 16 17" fill="#d0d0d0">
                    <path d="M5 0l5 2.500v6L5 11 0 8.500v-6z" />
                    <rect x="11" y="1" width="4" height="3" /><rect x="11" y="6" width="4" height="3" />
                    <rect y="12" width="15" height="4" fill="#ddd" />
                  </svg>
                </DockButton>
              </DockGroup>
            </Dock>
            <Panels>
              <Panel $h={129}>
                <PanelTabs>
                  <PanelTab $on $w={38}>颜色</PanelTab>
                  <PanelTab $w={38}>色板</PanelTab>
                  <PanelTools><PanelMenu /></PanelTools>
                </PanelTabs>
                <ColorBody>
                  <ChipStack><ChipFg /><ChipBg /></ChipStack>
                  <Sliders>
                    {[['R', '#f00'], ['G', '#0f0'], ['B', '#00f']].map(([l, c]) => (
                      <SliderRow key={l}>
                        <SliderLabel>{l}</SliderLabel>
                        <SliderTrack $end={c} />
                        <SliderValue>5</SliderValue>
                      </SliderRow>
                    ))}
                  </Sliders>
                </ColorBody>
                <Spectrum><SpectrumRamp /><SpectrumEnd /></Spectrum>
              </Panel>
              <Panel $h={129}>
                <PanelTabs>
                  <PanelTab $on $w={39}>调整</PanelTab>
                  <PanelTab $w={39}>样式</PanelTab>
                  <PanelTools><PanelMenu /></PanelTools>
                </PanelTabs>
                <AdjustTitle>添加调整</AdjustTitle>
                {adjustRows.map((r, i) => (
                  <IconRow key={i} $pad={r.pad}>
                    {r.items.map((it, j) => <IconCell key={j}>{it}</IconCell>)}
                  </IconRow>
                ))}
              </Panel>
              <Panel>
                <PanelTabs>
                  <PanelTab $on $w={39}>图层</PanelTab>
                  <PanelTab $w={39}>通道</PanelTab>
                  <PanelTab $w={39}>路径</PanelTab>
                  <PanelTools><PanelMenu /></PanelTools>
                </PanelTabs>
                <FilterRow>
                  <Select $w={71} $dim>
                    <svg width="12" height="12" viewBox="0 0 12 12"><circle cx="7" cy="5" r="3.800" fill="none" stroke="#bbb" strokeWidth="1.400" /><path d="M4 8l-3 3" stroke="#bbb" strokeWidth="1.800" /></svg>
                    类型<Updown />
                  </Select>
                  <LayerIcons>
                    <IconCell><G s={15}><rect x="2" y="3" width="16" height="14" fill="#666" stroke="#aaa" /><path d="M3 16l4-6 3 3 3-2 4 5z" fill="#aaa" /></G></IconCell>
                    <IconCell><G s={15} c="#aaa"><circle cx="10" cy="10" r="8" /><path d="M5 15L15 5a7 7 0 0 0-10 10z" fill="#666" /></G></IconCell>
                    <IconCell><SerifT $size={17} $c="#aaa">T</SerifT></IconCell>
                    <IconCell><G s={15}><path d="M3 3h14v14H3z" fill="none" stroke="#aaa" strokeWidth="1.300" /><path d="M1 1h4v4H1zM15 1h4v4h-4zM1 15h4v4H1zM15 15h4v4h-4z" fill="#aaa" /></G></IconCell>
                    <IconCell><G s={15}><path d="M9 1h6l3 3v11H9z" fill="none" stroke="#aaa" /><rect x="2" y="9" width="9" height="9" fill="#aaa" /></G></IconCell>
                  </LayerIcons>
                  <Toggle />
                </FilterRow>
                <FilterRow>
                  <Select $w={110} $dim>正常<Updown /></Select>
                  <SmallLabel $left={8}>不透明度:</SmallLabel>
                  <DimBox $auto><DimValue>100%</DimValue><DimArrow><DownTiny /></DimArrow></DimBox>
                </FilterRow>
                <FilterRow>
                  <SmallLabel $left={3}>锁定:</SmallLabel>
                  <LayerIcons $left={2} $gap={7}>
                    <IconCell><svg width="12" height="12" viewBox="0 0 12 12"><rect width="12" height="12" fill="#999" /><path d="M0 0h4v4H0zM8 0h4v4H8zM4 4h4v4H4zM0 8h4v4H0zM8 8h4v4H8z" fill="#666" /></svg></IconCell>
                    <IconCell><G s={16} c="#aaa"><path d="M18 2L9 11l2.500 2.500L19 4zM8 12c-2 0-3 2-4 3l-3 2c4 1 8 0 9-3z" /></G></IconCell>
                    <IconCell><G s={15} c="#aaa"><path d="M10 1l3 3h-2v5h5V7l3 3-3 3v-2h-5v5h2l-3 3-3-3h2v-5H4v2l-3-3 3-3v2h5V4H7z" /></G></IconCell>
                    <IconCell><Lock c="#aaa" /></IconCell>
                  </LayerIcons>
                  <SmallLabel $left={0} $auto>填充:</SmallLabel>
                  <DimBox><DimValue>100%</DimValue><DimArrow><DownTiny /></DimArrow></DimBox>
                </FilterRow>
                <LayerList>
                  <LayerMain>
                    <LayerRow>
                      <EyeCell>
                        <svg width="14" height="9" viewBox="0 0 14 9"><path d="M0 4.500C3-1.500 11-1.500 14 4.500 11 10.500 3 10.500 0 4.500z" fill="#d4d4d4" /><circle cx="7" cy="4.500" r="2.500" fill="#333" /></svg>
                      </EyeCell>
                      <LayerBody>
                        <LayerThumb />
                        <LayerName>背景</LayerName>
                        <Lock c="#e4e4e4" />
                      </LayerBody>
                    </LayerRow>
                  </LayerMain>
                  <LayerTrack />
                </LayerList>
                <PanelFoot>
                  <FootDoc /><FootDoc /><FootDoc /><FootDoc /><FootDoc /><FootDoc /><Trash />
                </PanelFoot>
              </Panel>
            </Panels>
          </SideBody>
        </Side>
      </Workspace>

      <History>
        <PanelTabs>
          <PanelTab $on $w={62}>历史记录</PanelTab>
          <PanelTools>
            <DoubleRight />
            <PanelBars />
            <PanelMenu />
          </PanelTools>
        </PanelTabs>
        <HistoryList>
          <HistoryRows>
            <HistoryRow>
              <G s={17}><path d="M3 8c2-4 7-6 11-4" fill="none" stroke="#cfcfcf" strokeWidth="1.400" /><path d="M17 6L9 13l2 2 7-8zM8 14c-2 0-3 1-3 2s-2 2-3 2c3 1 7 0 8-2z" /></G>
              <HistoryThumb />
              未标题-1
            </HistoryRow>
            <HistoryRow $on>
              <HistoryBox />
              <HistoryDoc width="14" height="16" viewBox="0 0 14 16"><path d="M0 0h11l3 3v13H0z" fill="#e8e8e8" /><path d="M2 6h10M2 8.500h10M2 11h10M2 13.500h10" stroke="#555" /></HistoryDoc>
              新建
            </HistoryRow>
          </HistoryRows>
          <HistoryTrack />
        </HistoryList>
        <HistoryFoot><NewDoc /><Camera /><Trash /></HistoryFoot>
        <HistoryGrip />
      </History>

      <Dialog>
        <DialogTitle>
          拾色器（前景色）
          <svg width="12" height="12" viewBox="0 0 12 12"><path d="M1 1l10 10M11 1L1 11" stroke="#222" strokeWidth="1.100" /></svg>
        </DialogTitle>
        <DialogBody>
          <PickerCol>
            <Field><Picker /></Field>
            <WebRow><CheckBox />只有 Web 颜色</WebRow>
          </PickerCol>
          <Hue>
            <HueMark $side="l" width="8" height="10" viewBox="0 0 8 10"><path d="M.5.500h3l4 4.500-4 4.500h-3z" fill="#fff" stroke="#777" /></HueMark>
            <HueMark $side="r" width="8" height="10" viewBox="0 0 8 10"><path d="M7.500.500h-3L.5 5l4 4.500h3z" fill="#fff" stroke="#777" /></HueMark>
          </Hue>
          <RightCol>
            <TopRow>
              <SwatchCol>
                <SwatchLabel>新的</SwatchLabel>
                <Swatch />
                <SwatchLabel>当前</SwatchLabel>
              </SwatchCol>
              <SwatchSide>
                <svg width="12" height="12" viewBox="0 0 12 12"><path d="M6 0l5.500 3v6L6 12 .5 9V3z" fill="#777" stroke="#444" /><path d="M.5 3L6 6l5.500-3M6 6v6" fill="none" stroke="#ddd" /></svg>
                <MiniSwatch />
              </SwatchSide>
              <ButtonCol>
                <DlgButton $default $gap={0}>确定</DlgButton>
                <DlgButton $gap={9}>取消</DlgButton>
                <DlgButton $gap={17}>添加到色板</DlgButton>
                <DlgButton $gap={17}>颜色库</DlgButton>
              </ButtonCol>
            </TopRow>
            <Fields>
              <FieldCol $w={106}>
                <Row><Radio $on /><RowLabel $w={28}>H:</RowLabel><NumBox $w={35}>68</NumBox><Unit>度</Unit></Row>
                <Row><Radio /><RowLabel $w={28}>S:</RowLabel><NumBox $w={35}>1</NumBox><Unit>%</Unit></Row>
                <Row><Radio /><RowLabel $w={28}>B:</RowLabel><NumBox $w={35}>2</NumBox><Unit>%</Unit></Row>
                <Row $top={9}><Radio /><RowLabel $w={28}>R:</RowLabel><NumBox $w={35}>5</NumBox></Row>
                <Row><Radio /><RowLabel $w={28}>G:</RowLabel><NumBox $w={35}>5</NumBox></Row>
                <Row><Radio /><RowLabel $w={28}>B:</RowLabel><NumBox $w={35}>5</NumBox></Row>
                <Row $top={9}>
                  <HashLabel>#</HashLabel>
                  <NumBox $w={79}><Selected>050505</Selected></NumBox>
                </Row>
              </FieldCol>
              <FieldCol $w={90}>
                <Row><Radio /><RowLabel $w={26}>L:</RowLabel><NumBox $w={44}>1</NumBox></Row>
                <Row><Radio /><RowLabel $w={26}>a:</RowLabel><NumBox $w={44}>0</NumBox></Row>
                <Row><Radio /><RowLabel $w={26}>b:</RowLabel><NumBox $w={44}>0</NumBox></Row>
                <Row $top={9}><RowLabel $w={39} $right>C:</RowLabel><NumBox $w={35}>91</NumBox><Unit $left={6}>%</Unit></Row>
                <Row><RowLabel $w={39} $right>M:</RowLabel><NumBox $w={35}>86</NumBox><Unit $left={6}>%</Unit></Row>
                <Row><RowLabel $w={39} $right>Y:</RowLabel><NumBox $w={35}>87</NumBox><Unit $left={6}>%</Unit></Row>
                <Row><RowLabel $w={39} $right>K:</RowLabel><NumBox $w={35}>78</NumBox><Unit $left={6}>%</Unit></Row>
              </FieldCol>
            </Fields>
          </RightCol>
        </DialogBody>
      </Dialog>

      <Watermark>
        <WmTitle>激活 Windows</WmTitle>
        <WmSub>转到“设置”以激活 Windows。</WmSub>
      </Watermark>
      <Overlay width="1728" height="936" viewBox="0 0 1728 936">
        <defs>
          <filter id="arrowShadow" x="-20%" y="-20%" width="140%" height="140%">
            <feDropShadow dx="1" dy="1.500" stdDeviation="1.200" floodColor="#000" floodOpacity="0.55" />
          </filter>
        </defs>
        <g filter="url(#arrowShadow)" fill="#e8000c">
          <path d="M183 565.500L184 568 47 632 50 640 26 642 44 627 46 630z" />
          <path d="M1190 254l-.6 2.500L1055 228l-2 1.500-23-11 25 1.500-1 5z" />
          <path d="M582 586l-3 .5L568 501l5-1-8-21-4 24 4-2z" />
        </g>
        <path d="M1590 888c-18 1-30 10-31 20-1 9 8 15 17 15 14 0 25-5 31-16-5 5-12 10-24 11-9 1-15-3-15-9 0-8 9-17 30-21z" fill="#2a7fc0" opacity="0.85" />
        <path d="M1612 902c-3 9-12 16-22 18 7-3 12-9 13-14z" fill="#7ab52a" opacity="0.85" />
      </Overlay>
      <Brand>
        <BrandName>极光下载站</BrandName>
        <BrandUrl>www.xz7.com</BrandUrl>
      </Brand>
    </Root>
  )
}
